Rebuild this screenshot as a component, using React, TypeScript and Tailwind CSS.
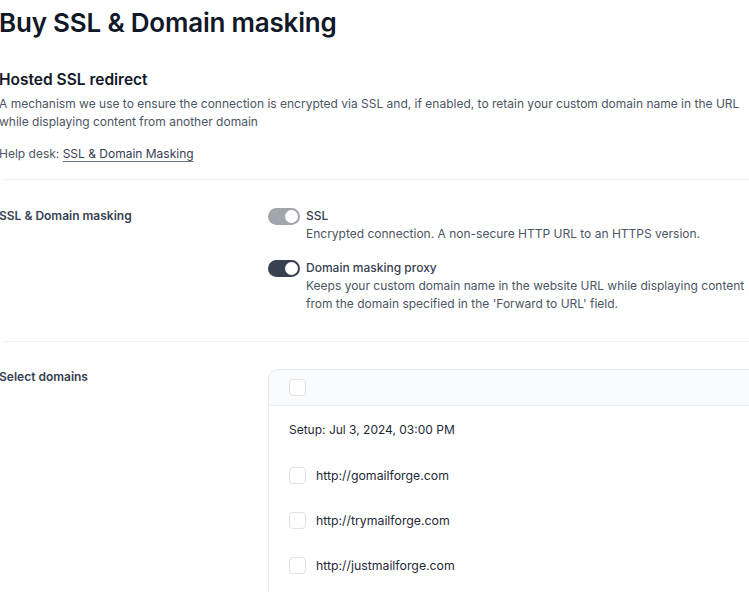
import React from "react";

function Toggle({ dark }: { dark?: boolean }) {
  return (
    <div
      className={`relative flex h-[17px] w-[32px] shrink-0 items-center rounded-full ${
        dark ? "bg-[#374151]" : "bg-[#a1a5ad]"
      }`}
    >
      <div className="absolute right-[2px] h-[13px] w-[13px] rounded-full bg-white" />
    </div>
  );
}

function Checkbox() {
  return <div className="h-[17px] w-[17px] shrink-0 rounded-[4px] border border-[#dfe1e5] bg-white" />;
}

export default function App() {
  return (
    <div
      className="min-h-[592px] w-[749px] overflow-hidden bg-white"
      style={{ fontFamily: "Inter, 'Noto Sans', sans-serif" }}
    >
      <div className="ml-[-1px] w-[800px]">
        <h1 className="pt-[5px] text-[26px] leading-[36px] font-semibold tracking-[-0.2px] text-[#111827]">
          Buy SSL &amp; Domain masking
        </h1>
        <h2 className="mt-[27px] text-[15.5px] leading-[24px] font-semibold text-[#111827]">Hosted SSL redirect</h2>
        <p className="mt-[3px] w-[752px] text-[12px] leading-[18px] text-[#4b5563]">
          A mechanism we use to ensure the connection is encrypted via SSL and, if enabled, to retain your custom domain
          name in the URL
          <br />
          while displaying content from another domain
        </p>
        <p className="mt-[14px] text-[12px] leading-[18px] text-[#4b5563]">
          Help desk:{" "}
          <span className="text-[#374151] underline decoration-[#6b7280] underline-offset-[3px]">
            SSL &amp; Domain Masking
          </span>
        </p>
        <div className="mt-[16px] ml-[3px] h-px bg-[#f0f1f3]" />

        <div className="grid grid-cols-[269px_1fr] pt-[27px] pb-[28px]">
          <div className="text-[12px] leading-[18px] font-semibold text-[#374151]">SSL &amp; Domain masking</div>
          <div className="flex flex-col gap-[16px]">
            <div className="flex gap-[6px]">
              <div className="flex h-[18px] items-center">
                <Toggle />
              </div>
              <div className="text-[12px] leading-[18px]">
                <div className="font-medium text-[#374151]">SSL</div>
                <div className="text-[#4b5563]">Encrypted connection. A non-secure HTTP URL to an HTTPS version.</div>
              </div>
            </div>
            <div className="flex gap-[6px]">
              <div className="flex h-[18px] items-center">
                <Toggle dark />
              </div>
              <div className="text-[12px] leading-[18px]">
                <div className="font-medium text-[#374151]">Domain masking proxy</div>
                <div className="text-[#4b5563]">
                  Keeps your custom domain name in the website URL while displaying content
                  <br />
                  from the domain specified in the 'Forward to URL' field.
                </div>
              </div>
            </div>
          </div>
        </div>
        <div className="ml-[3px] h-px bg-[#f0f1f3]" />

        <div className="grid grid-cols-[269px_1fr] pt-[26px]">
          <div className="text-[12px] leading-[18px] font-semibold text-[#374151]">Select domains</div>
          <div className="mt-[1px] rounded-tl-[10px] border border-r-0 border-[#e8eaed]">
            <div className="flex h-[36px] items-center rounded-tl-[10px] border-b border-[#eceef1] bg-[#f9fafb] px-[20px]">
              <Checkbox />
            </div>
            <div className="px-[20px] pt-[15px] pb-[20px]">
              <div className="text-[12px] leading-[18px] text-[#1f2937]">Setup: Jul 3, 2024, 03:00 PM</div>
              <div className="mt-[28px] flex flex-col gap-[28px]">
                {["http://gomailforge.com", "http://trymailforge.com", "http://justmailforge.com"].map((d) => (
                  <div key={d} className="flex items-center gap-[10px]">
                    <Checkbox />
                    <span className="text-[12.3px] leading-[17px] text-[#1f2937]">{d}</span>
                  </div>
                ))}
              </div>
            </div>
          </div>
        </div>
      </div>
    </div>
  );
}
